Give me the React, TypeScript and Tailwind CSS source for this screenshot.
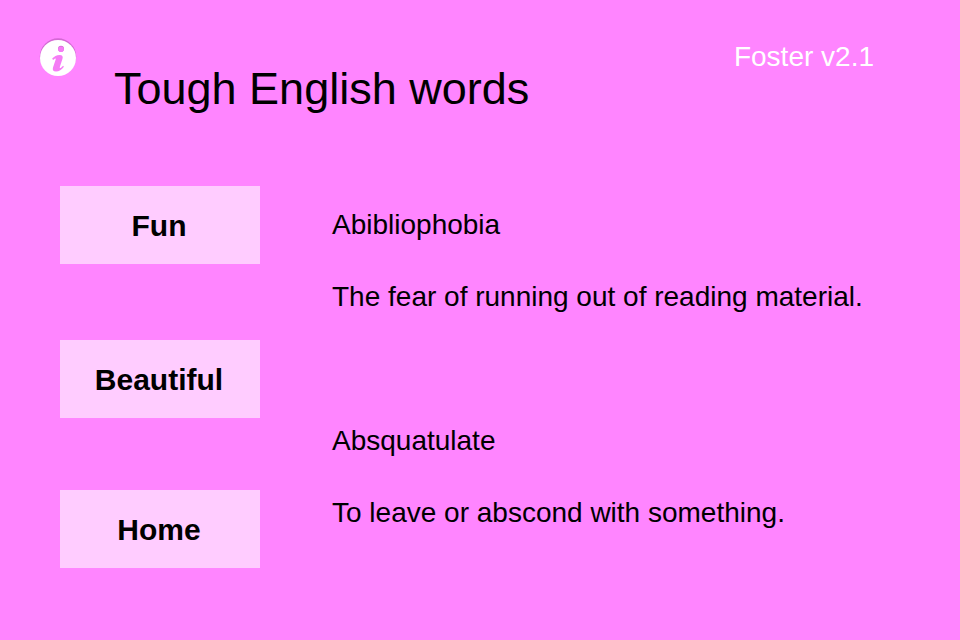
import React from "react";

const entries = [
  { word: "Abibliophobia", meaning: "The fear of running out of reading material." },
  { word: "Absquatulate", meaning: "To leave or abscond with something." },
];

const navButton =
  "flex h-[78px] w-full items-center justify-center bg-[#ffccff] pt-0.5 pr-0.5 text-[30px] leading-9 font-bold";

export default function App() {
  return (
    <div className="min-h-screen bg-[#ff85ff] font-['Liberation_Sans',Arial,sans-serif] text-black">
      <header className="flex items-start pt-9 pr-[86px] pl-9">
        <button type="button" aria-label="Info" className="h-11 w-11 shrink-0">
          <svg viewBox="0 0 44 44" className="h-11 w-11">
            <circle cx="22" cy="20.500" r="18.200" fill="#d468d4" />
            <circle cx="22" cy="22" r="18" fill="#ffffff" />
            <circle cx="25" cy="12.800" r="3" fill="#d468d4" />
            <circle cx="25" cy="13.300" r="2.800" fill="#f57cf5" />
            <path
              d="M16.200 22.600C18 20.400 20.600 18.900 23.600 18.900c2.700 0 3.600 1.500 2.900 3.900l-2.700 8.200c-.3 1.100.3 1.400 1.200.7l2.100-1.900.8.9c-2.200 2.900-4.900 4.800-7.900 4.800-2.700 0-3.800-1.600-3-4.100l2.600-7.700c.4-1.200-.2-1.500-1.100-.8l-1.500 1.200z"
              fill="#f57cf5"
            />
          </svg>
        </button>
        <h1 className="mt-[26px] ml-[34px] text-[45px] leading-[54px]">Tough English words</h1>
        <p className="mt-[3px] ml-auto text-[28px] leading-9 text-white">Foster v2.1</p>
      </header>
      <main className="flex gap-[72px] pt-[70px] pr-10 pl-[60px]">
        <nav className="flex w-[200px] shrink-0 flex-col">
          <button type="button" className={navButton}>Fun</button>
          <button type="button" className={`${navButton} mt-[76px]`}>Beautiful</button>
          <button type="button" className={`${navButton} mt-[72px]`}>Home</button>
        </nav>
        <dl className="flex flex-1 flex-col gap-[108px] pt-[21px] text-[28px] leading-9">
          {entries.map((e) => (
            <div key={e.word} className="flex flex-col gap-9">
              <dt>{e.word}</dt>
              <dd>{e.meaning}</dd>
            </div>
          ))}
        </dl>
      </main>
    </div>
  );
}
